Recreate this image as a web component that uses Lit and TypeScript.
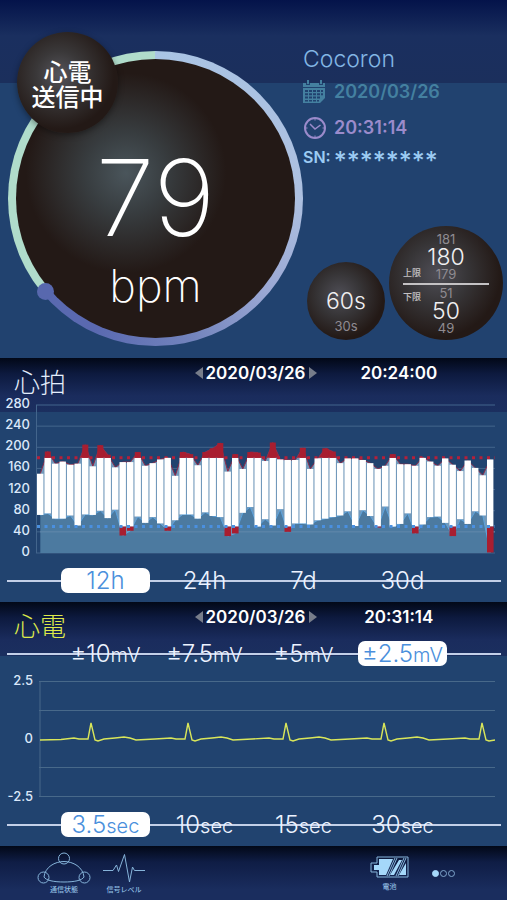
import { LitElement, html, svg, css } from "lit";
import { customElement, property, state } from "lit/decorators.js";
import { classMap } from "lit/directives/class-map.js";

/* One [highest, lowest] heart rate pair per time slot. */
const RATES: [number, number][] = [
  [150, 72], [192, 75], [169, 65], [173, 65], [167, 71], [169, 52], [205, 73], [164, 72],
  [204, 80], [186, 66], [162, 82], [172, 33], [172, 42], [191, 69], [165, 57], [170, 68],
  [177, 56], [181, 42], [146, 62], [191, 73], [187, 73], [166, 65], [191, 77], [198, 70],
  [208, 68], [154, 32], [187, 37], [159, 76], [191, 87], [190, 50], [174, 64], [209, 52],
  [177, 83], [176, 40], [176, 56], [199, 56], [159, 54], [179, 62], [198, 65], [192, 68],
  [170, 71], [179, 79], [179, 51], [176, 81], [170, 70], [159, 48], [165, 88], [187, 50],
  [168, 55], [168, 75], [165, 37], [181, 54], [173, 68], [165, 69], [179, 57], [167, 32],
  [155, 64], [175, 55], [161, 79], [147, 71], [177, 1],
];
const UPPER = 180;
const LOWER = 50;

/* Times of the beats along the trace, and the shape of one beat around its peak. */
const BEATS = [52, 149, 247, 345, 443];
const BEAT_SHAPE: [number, number][] = [
  [-17, 58], [-12, 59], [-3, 59], [0, 43], [4, 60], [7, 61], [13, 59],
  [24, 58], [33, 57], [39, 58], [45, 60], [64, 59],
];

@customElement("option-rail")
class OptionRail extends LitElement {
  @property({ attribute: false }) options: [string, string][] = [];
  @property({ type: Number }) selected = 0;
  @property() label = "";

  static styles = css`
    :host { display: block; margin: 0 6px 0 7px; }
    .rail {
      display: grid;
      grid-template-columns: repeat(4, minmax(0, 1fr));
      column-gap: 10px;
      padding: 0 54px;
      background: linear-gradient(#c3d0e8, #c3d0e8) center / 100% 2px no-repeat;
    }
    button {
      height: 25px;
      padding: 0;
      border: 0;
      border-radius: 7px;
      background: none;
      color: #edf3ff;
      font: 300 24px/25px Inter, "Liberation Sans", sans-serif;
      white-space: nowrap;
      display: flex;
      justify-content: center;
      align-items: baseline;
    }
    .unit { font-size: 20px; }
    .on { background: #fff; color: #4a8fdc; }
  `;

  render() {
    return html`<div class="rail" role="group" aria-label=${this.label}>
      ${this.options.map(([value, unit], i) => html`
        <button class=${classMap({ on: i === this.selected })}
          aria-pressed=${i === this.selected ? "true" : "false"}
          @click=${() => { this.selected = i; }}
        ><span>${value}</span><span class="unit">${unit}</span></button>`)}
    </div>`;
  }
}

@customElement("panel-header")
class PanelHeader extends LitElement {
  @property() name = "";
  @property() date = "";
  @property() time = "";

  static styles = css`
    :host { display: block; }
    header {
      display: grid;
      grid-template-columns: 1fr auto 1fr;
      align-items: start;
      height: 38px;
      padding: 0 10px 0 14px;
      color: #fff;
      font: 600 17px/30px Inter, "Liberation Sans", sans-serif;
    }
    h2 {
      margin: 0;
      padding-top: 9px;
      font: 300 26px/28px "Noto Sans CJK JP", sans-serif;
      color: var(--title, #e4eefc);
    }
    nav { display: flex; align-items: center; gap: 3px; }
    button { display: flex; padding: 0; border: 0; background: none; }
    .time { text-align: center; padding-right: 16px; }
  `;

  render() {
    return html`<header>
      <h2>${this.name}</h2>
      <nav>
        <button aria-label="前へ"><svg width="8" height="14" viewBox="0 0 8 14"><path d="M8 1V13L0 7Z" fill="#777d8a"/></svg></button>
        <span>${this.date}</span>
        <button aria-label="次へ"><svg width="8" height="14" viewBox="0 0 8 14"><path d="M0 1V13L8 7Z" fill="#777d8a"/></svg></button>
      </nav>
      <div class="time">${this.time}</div>
    </header>`;
  }
}

@customElement("rate-chart")
class RateChart extends LitElement {
  static styles = css`
    :host { display: flex; height: 162px; padding-right: 12px; gap: 6px; }
    .scale {
      width: 30px;
      display: flex;
      flex-direction: column;
      justify-content: space-between;
      text-align: right;
      color: #dbe8fa;
      font: 500 13px/14px Inter, "Liberation Sans", sans-serif;
    }
    svg { flex: 1; min-width: 0; height: 148px; margin-top: 9px; overflow: visible; }
  `;

  render() {
    const y = (bpm: number) => 148 - (bpm * 148) / 280;
    const x = (i: number) => 1 + i * 7.5;
    const mid = (i: number) => x(i) + 3.3;
    const line = (k: number) => RATES.map((r, i) => `${mid(i)},${y(r[k])}`).join(" ");
    const last = mid(RATES.length - 1);
    const area = (k: number) => `${mid(0)},148 ${line(k)} ${last},148`;
    const back = [...RATES].map((r, i) => `${mid(i)},${y(r[1])}`).reverse().join(" ");
    return html`
      <div class="scale">${[280, 240, 200, 160, 120, 80, 40, 0].map((v) => html`<span>${v}</span>`)}</div>
      <svg viewBox="0 0 459 148" preserveAspectRatio="none" role="img" aria-label="心拍">
        <clipPath id="over"><rect x="0" y="0" width="459" height=${y(UPPER)}/></clipPath>
        ${[0, 1, 2, 3, 4, 5, 6, 7].map((n) => svg`<path d="M0 ${y(n * 40)}H459" stroke="#43658c" stroke-width="1"/>`)}
        <path d="M0.5 0V148" stroke="#43658c"/>
        <polygon points=${area(1)} fill="#4c7aa0"/>
        <path d="M4 ${y(40)}H459" stroke="#6288ac"/>
        <polygon points="${line(0)} ${back}" fill="#7299bb"/>
        <polygon points=${area(0)} fill="#a81e30" clip-path="url(#over)"/>
        <polyline points=${line(0)} fill="none" stroke="#8e2b49" stroke-width="1"/>
        <polyline points=${line(1)} fill="none" stroke="#5ea6e0" stroke-width="1"/>
        <path d="M1 ${y(UPPER)}H459" stroke="#b5203a" stroke-width="3" stroke-dasharray="3 4.5"/>
        ${RATES.map(([hi, lo], i) => {
          const top = y(Math.min(hi, UPPER));
          const bottom = y(Math.max(lo, LOWER));
          return svg`
            <rect x=${x(i)} y=${top} width="6.4" height=${bottom - top} fill="#fff"/>
            ${hi > UPPER + 4 ? svg`<rect x=${x(i) + 0.3} y=${y(hi)} width="6" height=${top - y(hi)} fill="#a81e30"/>` : ""}
            ${lo < LOWER ? svg`<rect x=${x(i)} y=${bottom} width="6.6" height=${y(lo) - bottom} fill="#a81e30"/>` : ""}`;
        })}
        <path d="M1 ${y(LOWER)}H459" stroke="#4a90e0" stroke-width="3" stroke-dasharray="3 4.5"/>
      </svg>`;
  }
}

@customElement("ecg-chart")
class EcgChart extends LitElement {
  static styles = css`
    :host { display: flex; height: 130px; padding-right: 12px; gap: 6px; }
    .scale {
      width: 33px;
      display: flex;
      flex-direction: column;
      justify-content: space-between;
      text-align: right;
      color: #dbe8fa;
      font: 500 13px/14px Inter, "Liberation Sans", sans-serif;
    }
    svg { flex: 1; min-width: 0; height: 117px; margin-top: 7px; }
  `;

  render() {
    const trace = BEATS.flatMap((b) => BEAT_SHAPE.map(([dx, py]) => [b + dx, py]))
      .filter(([px]) => px < 455)
      .map((p) => p.join(",")).join(" ");
    return html`
      <div class="scale"><span>2.5</span><span>0</span><span>-2.5</span></div>
      <svg viewBox="0 0 456 117" preserveAspectRatio="none" role="img" aria-label="心電">
        <path d="M0 1.5H456M0 30.5H456M0 87.5H456M0 116.5H456M1 1V117" fill="none" stroke="#48698a"/>
        <polyline points="1,60 22,59.5 ${trace} 456,60" fill="none" stroke="#d9e65a" stroke-width="1.4"/>
      </svg>`;
  }
}

@customElement("app-root")
class AppRoot extends LitElement {
  @state() private page = 0;

  static styles = css`
    :host {
      display: block;
      background: #21426f;
      color: #fff;
      font-family: Inter, "Liberation Sans", "Noto Sans CJK JP", sans-serif;
    }
    .hero {
      display: flex;
      padding: 45px 4px 12px 8px;
      background: linear-gradient(#04134a 0, #1a2f5f 36px, #1b2f5c 83px, #21426f 83px);
    }
    .dial {
      position: relative;
      flex: none;
      align-self: flex-end;
      width: 295px;
      height: 295px;
      margin-top: 6px;
      border-radius: 50%;
      background: conic-gradient(#a9c4e4 0deg, #adc0e0 90deg, #9ba8d4 130deg, #7384bd 165deg, #5a69b0 205deg, #5a69b0 229deg, #b0dccb 229deg, #b0dccb 360deg);
    }
    .face {
      position: absolute;
      inset: 8px;
      border-radius: 50%;
      background: radial-gradient(circle at 110px 114px, #4a555b 0, #383d40 40px, #231916 100px);
      display: flex;
      flex-direction: column;
      align-items: center;
    }
    .rate { font-size: 106px; line-height: 108px; font-weight: 200; margin-top: 85px; }
    .unit { font-size: 45px; line-height: 52px; font-weight: 200; margin-top: 8px; }
    .knob {
      position: absolute;
      left: 29px;
      top: 232px;
      width: 17px;
      height: 17px;
      border-radius: 50%;
      background: #5868ae;
    }
    .send {
      position: absolute;
      left: 9px;
      top: -19px;
      width: 101px;
      height: 101px;
      padding: 0;
      border: 0;
      border-radius: 50%;
      background: radial-gradient(circle at 42% 42%, #55545a 0, #3a3839 28%, #231916 66%);
      box-shadow: 0 2px 6px #0006;
      color: #fff;
      font: 500 24px/25px "Noto Sans CJK JP", sans-serif;
    }
    .side {
      flex: 1;
      display: flex;
      flex-direction: column;
      justify-content: space-between;
      padding-bottom: 6px;
    }
    h1 { margin: 0; font-size: 23px; line-height: 28px; font-weight: 300; color: #83b6e4; }
    .info { display: flex; align-items: center; gap: 8px; font-weight: 600; font-size: 18px; }
    .day { color: #4480a0; line-height: 38px; }
    .clock { color: #9b8bcb; line-height: 34px; }
    .serial { color: #9ccbf3; gap: 3px; align-items: flex-start; font-size: 16px; line-height: 24px; }
    .stars { font-size: 25px; font-weight: 500; padding-top: 4px; }
    .balls { display: flex; align-items: flex-end; justify-content: flex-end; gap: 4px; }
    .ball {
      flex: none;
      box-sizing: border-box;
      border-radius: 50%;
      background: radial-gradient(circle at 42% 42%, #4f4e56 0, #363436 34%, #231916 68%);
      text-align: center;
      color: #8f8b91;
      font-size: 13px;
    }
    .main { display: block; font-size: 23px; line-height: 23px; font-weight: 300; color: #f0f0f2; }
    .sub { display: block; line-height: 14px; }
    .low { line-height: 10px; }
    .span { width: 78px; height: 78px; padding-top: 28px; }
    .span .sub { line-height: 18px; padding-top: 4px; }
    .limits { width: 114px; height: 114px; padding: 6px 14px 0; }
    .half { display: grid; grid-template-columns: 1fr auto 1fr; }
    .upper { padding-bottom: 4px; border-bottom: 2px solid #c4c2c4; }
    .tag { font: 500 9px/12px "Noto Sans CJK JP", sans-serif; color: #c4c2c4; text-align: left; }
    .upper .tag { align-self: end; }
    .lower .tag { padding-top: 5px; }
    .lower { padding-top: 1px; }
    .panel { background: linear-gradient(#020817 0, #0d1a3f 16px, #1a2c5d 38px, #1b2f5f 54px, #21436f 54px); padding-bottom: 9px; }
    .beat option-rail { margin-top: 10px; }
    .ecg panel-header { --title: #dde94a; }
    .ecg .gain { margin-top: 1px; }
    .ecg ecg-chart { margin-top: 7px; }
    .ecg .sweep { margin-top: 9px; }
    footer {
      display: flex;
      align-items: flex-start;
      box-sizing: border-box;
      min-height: 54px;
      padding: 6px 52px 0 37px;
      background: linear-gradient(#020817 0, #0f1d45 16px, #1a2d5e 44px);
      color: #8fbce0;
    }
    .item { display: flex; flex-direction: column; align-items: center; font: 500 7px/10px "Noto Sans CJK JP", sans-serif; }
    .item svg { display: block; fill: none; stroke: #86b4da; }
    .signal { margin-left: 12px; }
    .battery { margin-left: auto; }
    .pages { display: flex; gap: 1px; margin: 18px 0 0 23px; }
    .dot { box-sizing: border-box; width: 7px; height: 7px; padding: 0; border: 1px solid #7fa6cc; border-radius: 50%; background: none; }
    .now { background: #a5d8fa; border-color: #a5d8fa; }
  `;

  render() {
    return html`
      <section class="hero">
        <div class="dial">
          <div class="face"><div class="rate">79</div><div class="unit">bpm</div></div>
          <div class="knob"></div>
          <button class="send">心電<br>送信中</button>
        </div>
        <div class="side">
          <div>
            <h1>Cocoron</h1>
            <div class="info day">
              <svg width="23" height="24" viewBox="0 0 23 24" fill="#4480a0">
                <path d="M0 3H3V5H7V3H16V5H20V3H22V7H0ZM4 0H6V4H4ZM17 0H19V4H17Z"/>
                <path fill-rule="evenodd" d="M0 8H22V18L17 23H0ZM2 10V12H5V10ZM6 10V12H9V10ZM10 10V12H13V10ZM14 10V12H17V10ZM18 10V12H20V10ZM2 13.3V15.3H5V13.3ZM6 13.3V15.3H9V13.3ZM10 13.3V15.3H13V13.3ZM14 13.3V15.3H17V13.3ZM18 13.3V15.3H20V13.3ZM2 16.6V18.6H5V16.6ZM6 16.6V18.6H9V16.6ZM10 16.6V18.6H13V16.6ZM14 16.6V18.6H17V16.6ZM2 19.9V21.5H5V19.9ZM6 19.9V21.5H9V19.9ZM10 19.9V21.5H13V19.9ZM14 19.9V21.5H16V19.9Z"/>
              </svg>
              <span>2020/03/26</span>
            </div>
            <div class="info clock">
              <svg width="23" height="24" viewBox="0 0 23 24" fill="none" stroke="#9b8bcb">
                <circle cx="12" cy="12" r="10" stroke-width="2"/>
                <path d="M7 8L12 13L17.5 9" stroke-width="1.5"/>
                <path d="M12 3V4.5M12 19.5V21M3 12H4.5M19.5 12H21" stroke-width="1"/>
              </svg>
              <span>20:31:14</span>
            </div>
            <div class="info serial"><span>SN:</span><span class="stars">********</span></div>
          </div>
          <div class="balls">
            <div class="ball span"><span class="main">60s</span><span class="sub">30s</span></div>
            <div class="ball limits">
              <div class="half upper">
                <span class="tag">上限</span>
                <div><span class="sub">181</span><span class="main">180</span><span class="sub low">179</span></div>
              </div>
              <div class="half lower">
                <span class="tag">下限</span>
                <div><span class="sub">51</span><span class="main">50</span><span class="sub low">49</span></div>
              </div>
            </div>
          </div>
        </div>
      </section>

      <section class="panel beat">
        <panel-header name="心拍" date="2020/03/26" time="20:24:00"></panel-header>
        <rate-chart></rate-chart>
        <option-rail label="心拍の期間" .options=${[["12h", ""], ["24h", ""], ["7d", ""], ["30d", ""]]} .selected=${0}></option-rail>
      </section>

      <section class="panel ecg">
        <panel-header name="心電" date="2020/03/26" time="20:31:14"></panel-header>
        <option-rail class="gain" label="電圧" .options=${[["±10", "mV"], ["±7.5", "mV"], ["±5", "mV"], ["±2.5", "mV"]]} .selected=${3}></option-rail>
        <ecg-chart></ecg-chart>
        <option-rail class="sweep" label="時間" .options=${[["3.5", "sec"], ["10", "sec"], ["15", "sec"], ["30", "sec"]]} .selected=${0}></option-rail>
      </section>

      <footer>
        <div class="item">
          <svg width="54" height="32" viewBox="0 0 54 32">
            <circle cx="27" cy="6.5" r="5.5"/><circle cx="6.5" cy="25.5" r="5.5"/><circle cx="47.5" cy="25.5" r="5.5"/>
            <path d="M7 25C8 15 18 9.500 27 9.500S46 15 47 25M7 25C9 28.500 17 30 27 30S45 28.500 47 25"/>
          </svg>
          <span>通信状態</span>
        </div>
        <div class="item signal">
          <svg width="42" height="32" viewBox="0 0 42 32">
            <path d="M0 18.500H10L13.500 13L15.500 19.500L21.500 2.500L26.500 30L29.500 15L31.500 18.500H42"/>
          </svg>
          <span>信号レベル</span>
        </div>
        <div class="item battery">
          <svg width="39" height="29" viewBox="0 0 39 29">
            <path d="M7 5H38V25H7V20H1V11H7Z"/>
            <path d="M9 7H23L16 23H9V18H4V13H9ZM29 8H32L24 23H20ZM36 11V23H29Z" fill="#a5d8fa" stroke="none"/>
            <path d="M25 6L17 24M27 6L19 24M34 6L26 24M36 6L28 24"/>
          </svg>
          <span>電池</span>
        </div>
        <div class="pages">
          ${[0, 1, 2].map((n) => html`<button class=${classMap({ dot: true, now: n === this.page })}
            aria-label=${`ページ ${n + 1}`} @click=${() => { this.page = n; }}></button>`)}
        </div>
      </footer>
    `;
  }
}
